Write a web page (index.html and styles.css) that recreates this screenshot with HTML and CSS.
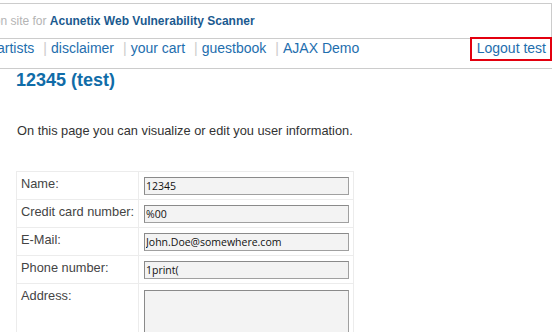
FILE: index.html
```html
<!DOCTYPE html>
<html lang="en">
<head>
<meta charset="utf-8">
<title>user info</title>
<link rel="stylesheet" href="styles.css">
</head>
<body>
<div class="masthead">
  <p class="tagline"><span class="muted">TEST and Demonstration site for </span><strong>Acunetix Web Vulnerability Scanner</strong></p>
</div>
<nav class="globalnav">
  <a href="#" class="first">artists</a><span class="sep">|</span>
  <a href="#">disclaimer</a><span class="sep">|</span>
  <a href="#">your cart</a><span class="sep">|</span>
  <a href="#">guestbook</a><span class="sep">|</span>
  <a href="#">AJAX Demo</a>
  <a href="#" class="logout">Logout test</a>
</nav>
<main class="content">
  <h2 class="title">12345 (test)</h2>
  <p class="intro">On this page you can visualize or edit you user information.</p>
  <table class="info">
    <tr><td class="label">Name:</td><td class="field"><input type="text" value="12345"></td></tr>
    <tr><td class="label">Credit card number:</td><td class="field"><input type="text" value="%00"></td></tr>
    <tr><td class="label">E-Mail:</td><td class="field"><input type="text" value="John.Doe@somewhere.com"></td></tr>
    <tr><td class="label">Phone number:</td><td class="field"><input type="text" value="1print("></td></tr>
    <tr><td class="label">Address:</td><td class="field"><textarea></textarea></td></tr>
  </table>
</main>
</body>
</html>
```
FILE: styles.css
```css
html, body {
  margin: 0;
  padding: 0;
  background: #ffffff;
  overflow: hidden;
}
body {
  font-family: "Liberation Sans", Arial, sans-serif;
  color: #333333;
}
.masthead {
  margin-top: 3px;
  width: 551px;
  height: 34px;
  border-top: 1px solid #cccccc;
  border-right: 1px solid #cccccc;
  border-bottom: 1px solid #cccccc;
  overflow: hidden;
}
.tagline {
  margin: 0;
  padding-top: 10px;
  font-size: 12px;
  line-height: 15px;
  white-space: nowrap;
  text-indent: -128px;
}
.tagline .muted {
  color: #b4b4b4;
}
.tagline strong {
  color: #1b5a8f;
  font-weight: bold;
}
.globalnav {
  display: flex;
  align-items: flex-start;
  width: 552px;
  box-sizing: border-box;
  height: 30px;
  border-bottom: 1px solid #cccccc;
  padding-top: 1px;
  font-size: 14px;
  line-height: 16px;
  white-space: nowrap;
}
.globalnav a {
  color: #1e6eae;
  text-decoration: none;
}
.globalnav a.first {
  margin-left: -3px;
}
.globalnav .sep {
  color: #cccccc;
  margin: 0 4px 0 9px;
}
.globalnav .logout {
  margin-left: auto;
  margin-right: 6px;
  position: relative;
}
.globalnav .logout::after {
  content: "";
  position: absolute;
  top: -3px;
  bottom: -5px;
  left: -7px;
  right: -6px;
  border: 2px solid #e3000f;
}
.content {
  padding-left: 16px;
}
.title {
  margin: 1px 0 0;
  font-size: 18px;
  line-height: 21px;
  font-weight: bold;
  color: #106ca8;
}
.intro {
  margin: 32px 0 0 1px;
  font-size: 12.8px;
  line-height: 15px;
  color: #333333;
}
.info {
  margin-top: 33px;
  border-collapse: collapse;
  border: 1px solid #ececec;
}
.info td {
  border: 1px solid #ececec;
  vertical-align: top;
}
.info .label {
  width: 117px;
  padding: 4px 0 8px 4px;
  font-size: 12.8px;
  line-height: 15px;
  color: #444444;
  white-space: nowrap;
}
.info .field {
  width: 205px;
  padding: 5px 4px 4px 5px;
}
.info input,
.info textarea {
  display: block;
  box-sizing: border-box;
  width: 205px;
  margin: 0;
  background: #f3f3f3;
  border: 1px solid #a0a0a0;
  border-top-color: #8a8a8a;
  border-left-color: #8a8a8a;
  font-family: "Open Sans", "DejaVu Sans", sans-serif;
  font-size: 10.5px;
  color: #111111;
}
.info input {
  height: 18px;
  padding: 0 1px;
  line-height: 16px;
}
.info textarea {
  height: 64px;
  margin-top: 1px;
  resize: none;
}
```
